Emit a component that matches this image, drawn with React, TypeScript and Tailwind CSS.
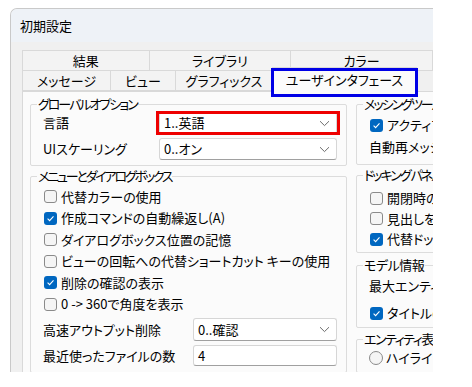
import React from "react";

const Chevron = () => (
  <svg width="11" height="7" viewBox="0 0 11 7" className="shrink-0">
    <path d="M1 1.2 L5.5 5.6 L10 1.2" stroke="#6b6b6b" strokeWidth="1" fill="none" />
  </svg>
);

const CB = ({ checked }: { checked?: boolean }) =>
  checked ? (
    <span className="ml-[1px] w-[13px] h-[13px] rounded-[3px] bg-[#0067c0] flex items-center justify-center shrink-0">
      <svg width="9" height="9" viewBox="0 0 9 9">
        <path d="M1.6 4.7 L3.6 6.6 L7.5 2.4" stroke="white" strokeWidth="1.1" fill="none" />
      </svg>
    </span>
  ) : (
    <span className="ml-[1px] w-[13px] h-[13px] rounded-[3px] border border-[#8a8a8a] bg-[#f5f5f5] shrink-0" />
  );

const CheckRow = ({ checked, label, h }: { checked?: boolean; label: string; h: string }) => (
  <div className={`flex items-center gap-[4px] whitespace-nowrap ${h}`}>
    <CB checked={checked} />
    <span>{label}</span>
  </div>
);

const Combo = ({ value, h }: { value: string; h: string }) => (
  <div
    className={`flex items-center justify-between bg-white border border-[#d6d6d6] border-b-[#a0a0a0] rounded-[3px] pl-[4px] pr-[6px] ${h}`}
  >
    <span>{value}</span>
    <Chevron />
  </div>
);

const Group = ({
  label,
  labelClass,
  className,
  children,
}: {
  label: string;
  labelClass?: string;
  className: string;
  children: React.ReactNode;
}) => (
  <div className={`relative border border-[#dcdcdc] rounded-[2px] ${className}`}>
    <span
      className={`absolute left-[6px] top-[-9px] px-[1px] bg-[#fbfbfb] leading-[16px] whitespace-nowrap ${labelClass ?? ""}`}
    >
      {label}
    </span>
    {children}
  </div>
);

export default function App() {
  return (
    <div className="w-[472px] h-[387px] bg-white font-['Noto_Sans_CJK_JP',sans-serif] [font-feature-settings:'palt'] text-[13px] leading-[16px] text-black pt-[8px] pl-[10px]">
      <div className="w-[423px] h-[364px] overflow-hidden bg-[#f0f0f0] border-l border-t border-[#c9c9c9] rounded-tl-[7px] flex flex-col">
        {/* title bar */}
        <div className="h-[33px] shrink-0 bg-[#eef2f7] flex items-center pl-[9px] pt-[1px]">初期設定</div>
        {/* body */}
        <div className="pl-[11px] pt-[8px] flex flex-col">
          {/* tab row 1 */}
          <div className="flex h-[21px] shrink-0">
            <div className="w-[147px] border border-[#d9d9d9] bg-[#f3f3f3] flex items-center justify-center">結果</div>
            <div className="w-[164px] -ml-px border border-[#d9d9d9] bg-[#f3f3f3] flex items-center justify-center">ライブラリ</div>
            <div className="w-[143px] -ml-px border border-[#d9d9d9] bg-[#f3f3f3] flex items-center justify-center shrink-0">カラー</div>
          </div>
          {/* tab row 2 */}
          <div className="flex h-[21px] items-end -mt-px shrink-0">
            <div className="w-[89px] h-full border border-[#d9d9d9] bg-[#f3f3f3] flex items-center justify-center">メッセージ</div>
            <div className="w-[66px] h-full -ml-px border border-[#d9d9d9] bg-[#f3f3f3] flex items-center justify-center">ビュー</div>
            <div className="w-[98px] h-full -ml-px border border-[#d9d9d9] bg-[#f3f3f3] flex items-center justify-center">グラフィックス</div>
            <div className="relative z-10 w-[145px] h-[26px] -ml-px -mb-[2px] border border-b-0 border-[#d9d9d9] bg-[#fbfbfb] flex items-center justify-center pb-[2px]">
              ユーザインタフェース
              <div className="absolute left-[-2px] right-[-2px] top-[0px] bottom-[-4px] border-[3px] border-[#0000e6]" />
            </div>
          </div>
          {/* tab page */}
          <div className="border-l border-t border-[#d9d9d9] bg-[#fbfbfb] pl-[7px] pt-[12px] flex gap-[9px] h-[300px]">
            {/* left column */}
            <div className="w-[317px] shrink-0 flex flex-col gap-[10px]">
              <Group label="グローバルオプション" labelClass="tracking-[-2px]" className="pl-[12px] pr-[9px] pt-[7px] pb-[5px]">
                <div className="flex flex-col gap-[4px]">
                  <div className="flex items-center h-[22px]">
                    <span className="w-[116px] shrink-0">言語</span>
                    <div className="relative flex-1">
                      <Combo value="1..英語" h="h-[22px]" />
                      <div className="absolute left-[-3px] right-[-3px] top-[-1px] bottom-[-1px] border-[3px] border-[#ee0000]" />
                    </div>
                  </div>
                  <div className="flex items-center h-[22px]">
                    <span className="w-[116px] shrink-0">UIスケーリング</span>
                    <div className="flex-1">
                      <Combo value="0..オン" h="h-[22px]" />
                    </div>
                  </div>
                </div>
              </Group>
              <Group label="メニューとダイアログボックス" labelClass="tracking-[-2.2px]" className="pl-[12px] pr-[9px] pt-[9px] pb-[6px]">
                <CheckRow label="代替カラーの使用" h="h-[21.5px]" />
                <CheckRow checked label="作成コマンドの自動繰返し(A)" h="h-[21.5px]" />
                <CheckRow label="ダイアログボックス位置の記憶" h="h-[21.5px]" />
                <CheckRow label="ビューの回転への代替ショートカット キーの使用" h="h-[21.5px]" />
                <CheckRow checked label="削除の確認の表示" h="h-[21.5px]" />
                <CheckRow label="0 -> 360で角度を表示" h="h-[21.5px]" />
                <div className="flex items-center h-[23px] mt-[3px]">
                  <span className="w-[150px] shrink-0">高速アウトプット削除</span>
                  <div className="flex-1">
                    <Combo value="0..確認" h="h-[23px]" />
                  </div>
                </div>
                <div className="flex items-center h-[21px] mt-[4px]">
                  <span className="w-[150px] shrink-0">最近使ったファイルの数</span>
                  <div className="flex-1 h-[21px] bg-white border border-[#d6d6d6] border-b-[#a0a0a0] rounded-[3px] pl-[4px] flex items-center">
                    4
                  </div>
                </div>
              </Group>
            </div>
            {/* right column */}
            <div className="w-[140px] shrink-0 flex flex-col">
              <Group label="メッシングツール" labelClass="tracking-[-2px]" className="pl-[12px] pt-[9px] pb-[6px]">
                <CheckRow checked label="アクティブ化" h="h-[22px]" />
                <div className="h-[22px] flex items-center whitespace-nowrap">自動再メッシュ</div>
              </Group>
              <Group label="ドッキング パネル" labelClass="tracking-[-2px]" className="mt-[10px] pl-[12px] pt-[12px] pb-[2px]">
                <CheckRow label="開閉時のアニメ" h="h-[20.5px]" />
                <CheckRow label="見出しを表示" h="h-[20.5px]" />
                <CheckRow checked label="代替ドッキング" h="h-[20.5px]" />
              </Group>
              <Group label="モデル情報" labelClass="tracking-[-0.5px]" className="mt-[12.5px] pl-[12px] pt-[9px] pb-[3px]">
                <div className="h-[22px] flex items-center whitespace-nowrap">最大エンティティ</div>
                <div className="mt-[5px]">
                  <CheckRow checked label="タイトルの表示" h="h-[22px]" />
                </div>
              </Group>
              <Group label="エンティティ表示" labelClass="tracking-[-1.5px]" className="mt-[11px] pl-[12px] pt-[8px] pb-[4px]">
                <div className="h-[20px] flex items-center gap-[3px] whitespace-nowrap">
                  <span className="w-[14px] h-[14px] rounded-full border border-[#8a8a8a] bg-[#f5f5f5] shrink-0" />
                  <span>ハイライト</span>
                </div>
              </Group>
            </div>
          </div>
        </div>
      </div>
    </div>
  );
}
